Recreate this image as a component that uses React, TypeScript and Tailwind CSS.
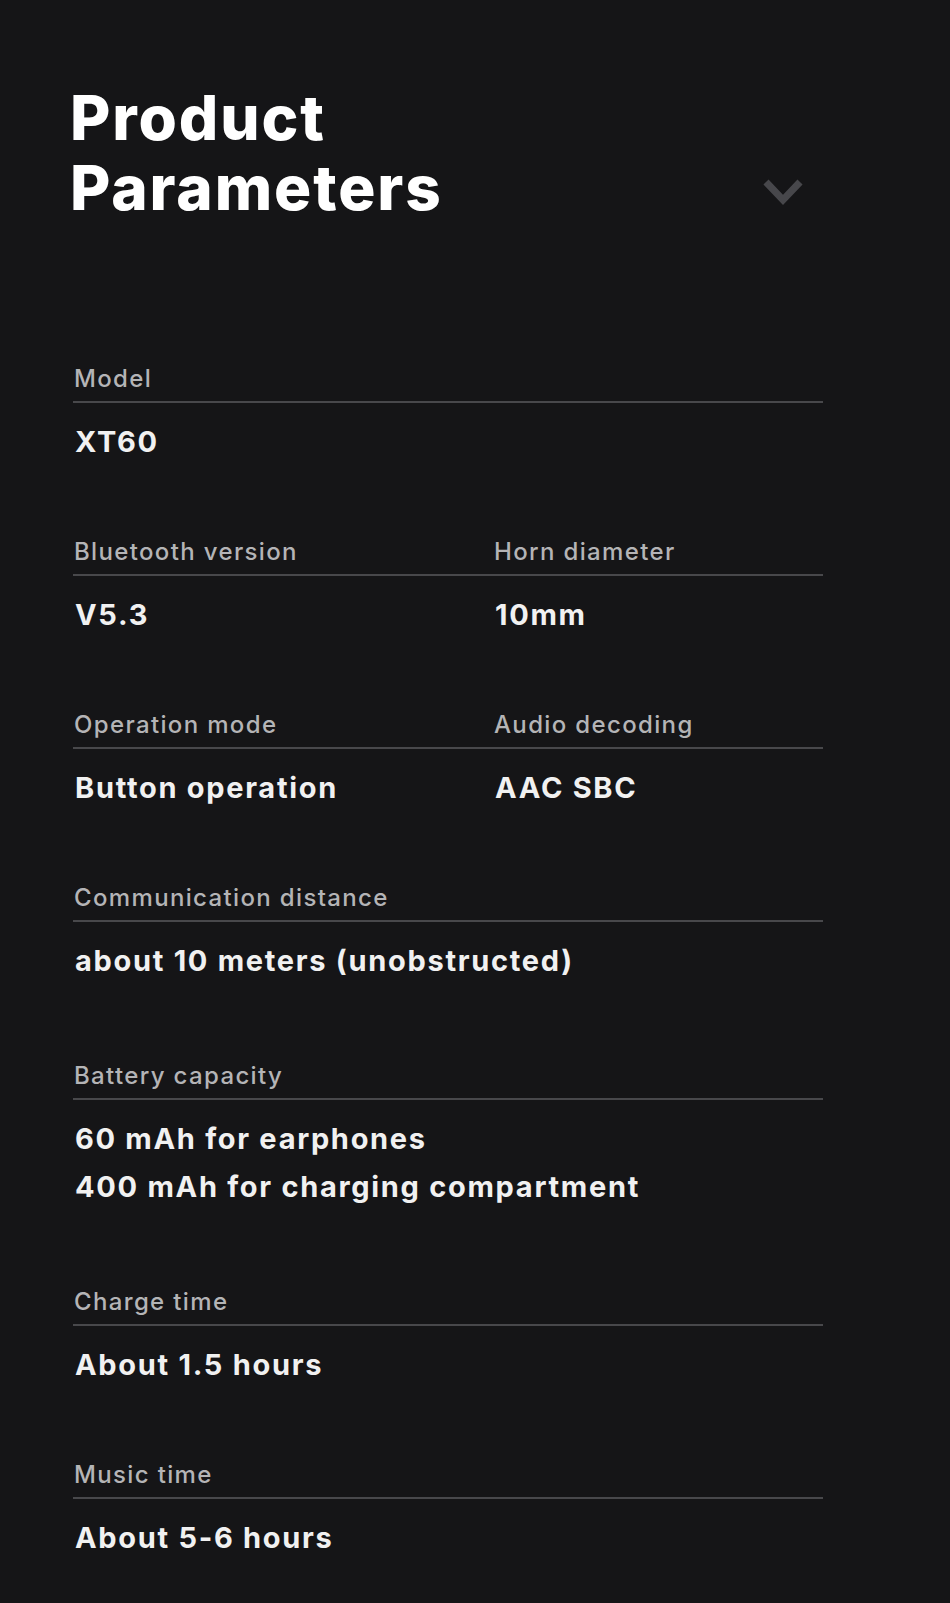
const font = { fontFamily: 'Inter, "Noto Sans", sans-serif' };

type Cell = { label: string; value: string[] };

const rows: { cells: Cell[]; extra?: boolean }[] = [
  { cells: [{ label: 'Model', value: ['XT60'] }] },
  {
    cells: [
      { label: 'Bluetooth version', value: ['V5.3'] },
      { label: 'Horn diameter', value: ['10mm'] },
    ],
  },
  {
    cells: [
      { label: 'Operation mode', value: ['Button operation'] },
      { label: 'Audio decoding', value: ['AAC SBC'] },
    ],
  },
  { cells: [{ label: 'Communication distance', value: ['about 10 meters (unobstructed)'] }], extra: true },
  {
    cells: [{ label: 'Battery capacity', value: ['60 mAh for earphones', '400 mAh for charging compartment'] }],
    extra: true,
  },
  { cells: [{ label: 'Charge time', value: ['About 1.5 hours'] }] },
  { cells: [{ label: 'Music time', value: ['About 5-6 hours'] }] },
];

const ParamCell = ({ cell }: { cell: Cell }) => (
  <div>
    <div className="border-b-2 border-[#48484b] pb-[6px] pl-[1px] text-[24px] leading-[32px] font-medium tracking-[1.35px] text-[#b4b4b6]">
      {cell.label}
    </div>
    <div className="pt-[15px] pl-[2px] text-[29px] leading-[48px] font-bold tracking-[1.7px] text-[#f1f1f1]">
      {cell.value.map((v) => (
        <div key={v}>{v}</div>
      ))}
    </div>
  </div>
);

export default function App() {
  return (
    <div className="min-h-[1603px] w-full bg-[#151517] pl-[73px] pt-[83px] pb-[40px]" style={font}>
      <div className="flex w-[750px] items-end justify-between">
        <h2 className="ml-[-3px] text-[62px] leading-[70px] font-extrabold tracking-[1.9px] text-white">
          Product
          <br />
          Parameters
        </h2>
        <svg width="46" height="32" viewBox="0 0 46 32" className="mb-[15px] mr-[17px]">
          <polyline points="6,6 23,24 40,6" fill="none" stroke="#47474b" strokeWidth="7" />
        </svg>
      </div>

      <div className="mt-[140px] flex w-[750px] flex-col">
        {rows.map((row, i) => (
          <div
            key={i}
            className={`grid grid-cols-[420px_330px] ${i > 0 ? (rows[i - 1].extra ? 'mt-[75px]' : 'mt-[70px]') : ''}`}
          >
            {row.cells.length === 1 ? (
              <div className="col-span-2">
                <ParamCell cell={row.cells[0]} />
              </div>
            ) : (
              row.cells.map((c) => <ParamCell key={c.label} cell={c} />)
            )}
          </div>
        ))}
      </div>
    </div>
  );
}
